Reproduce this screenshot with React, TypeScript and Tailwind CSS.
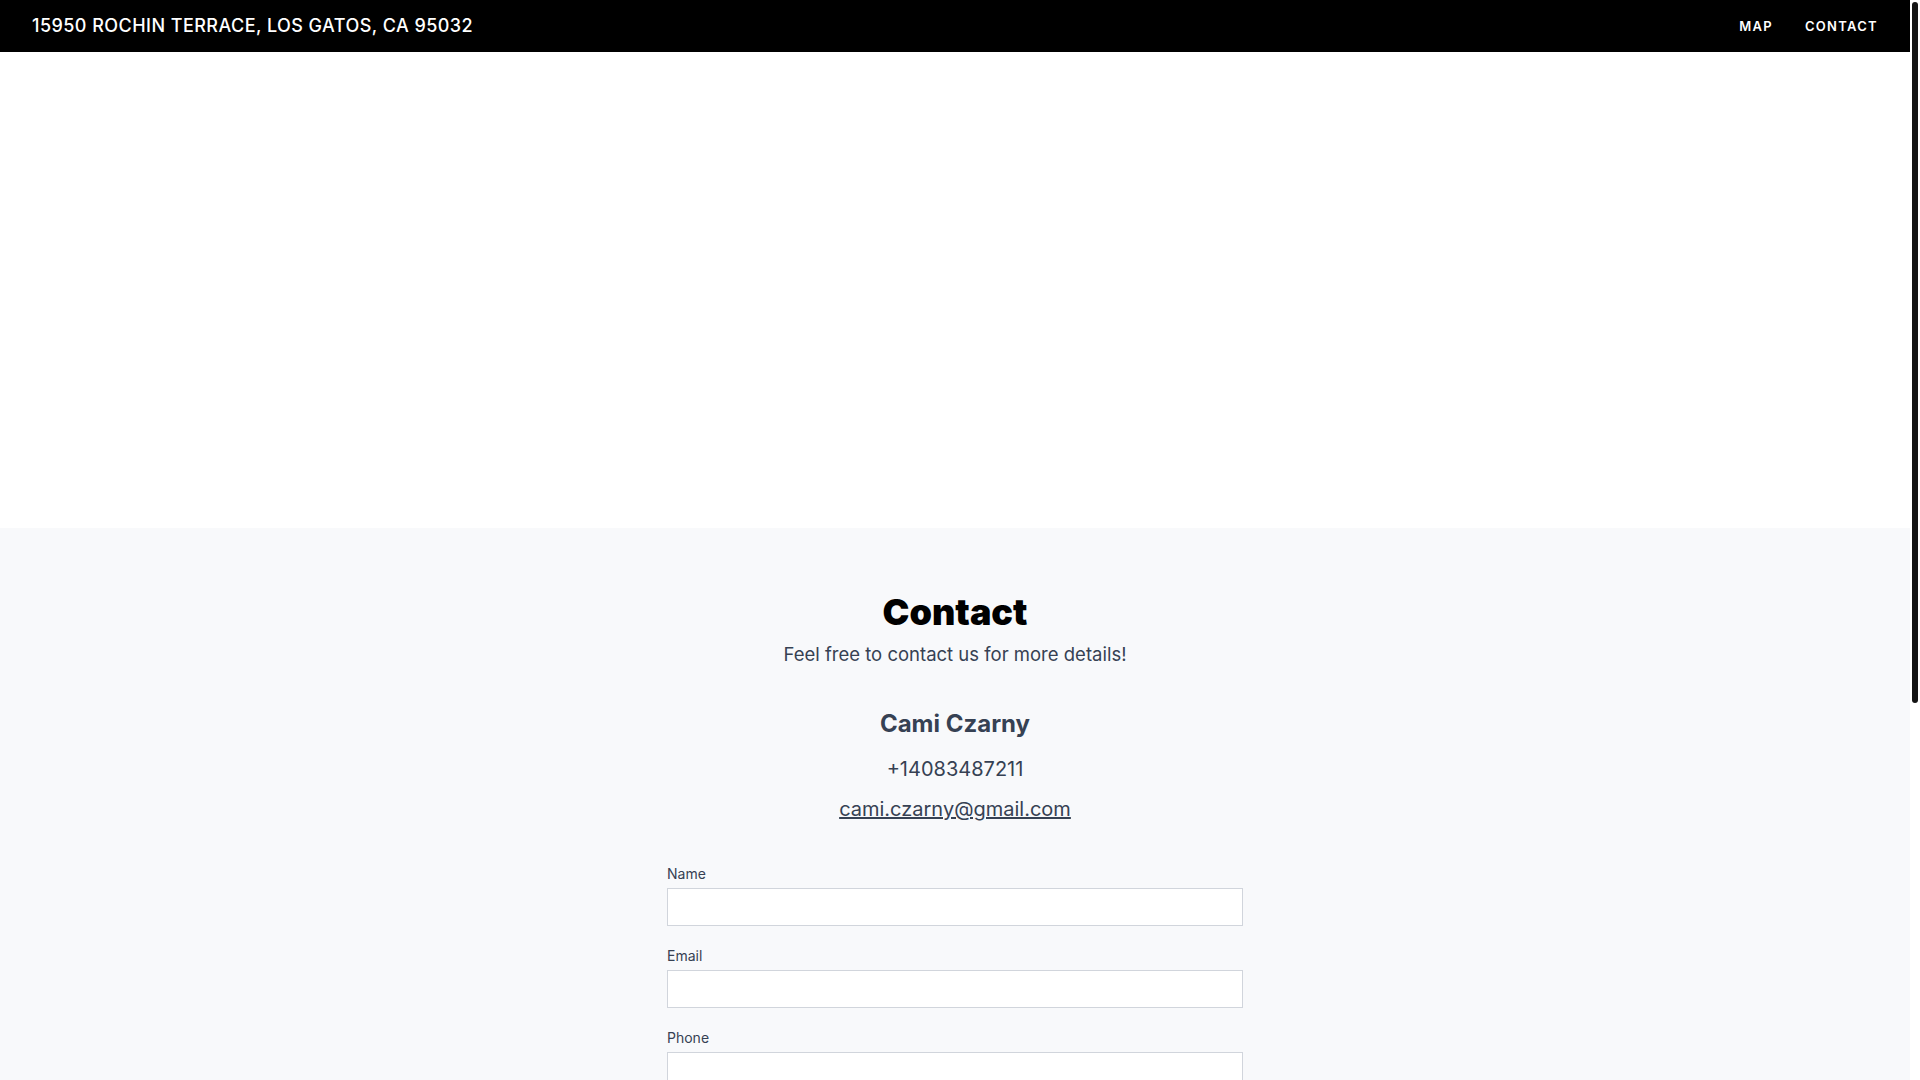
export default function App() {
  return (
    <div className="flex h-screen overflow-hidden bg-white font-['Inter',sans-serif]">
      <div className="min-w-0 flex-1">
        <header className="flex h-[52px] items-center justify-between bg-black pl-8 pr-4">
          <a href="#" className="text-lg font-medium tracking-wide text-white">
            15950 ROCHIN TERRACE, LOS GATOS, CA 95032
          </a>
          <nav className="flex items-center pt-0.5">
            <a href="#map" className="px-4 text-[13px] font-semibold tracking-widest text-white">
              MAP
            </a>
            <a href="#contact" className="px-4 text-[13px] font-semibold tracking-widest text-white">
              CONTACT
            </a>
          </nav>
        </header>

        <section id="map" className="h-[476px] bg-white"></section>

        <section id="contact" className="bg-[#f8f9fb] px-4 pt-16 pb-16">
          <div className="mx-auto flex max-w-xl flex-col items-center text-center">
            <h2 className="text-4xl font-black text-black">Contact</h2>
            <p className="mt-2 text-[18.5px] leading-7 text-gray-700">Feel free to contact us for more details!</p>

            <h3 className="mt-10 text-2xl font-bold text-gray-700">Cami Czarny</h3>
            <p className="mt-[15px] text-xl text-gray-700">+14083487211</p>
            <a href="mailto:cami.czarny@gmail.com" className="mt-3 text-xl text-gray-700 underline">
              cami.czarny@gmail.com
            </a>
          </div>

          <form className="mx-auto mt-[41px] flex w-[576px] flex-col gap-5">
            <div className="flex flex-col">
              <label className="mb-1 text-sm text-gray-700">Name</label>
              <input type="text" className="h-[38px] border border-gray-300 bg-white px-3 text-sm" />
            </div>
            <div className="flex flex-col">
              <label className="mb-1 text-sm text-gray-700">Email</label>
              <input type="email" className="h-[38px] border border-gray-300 bg-white px-3 text-sm" />
            </div>
            <div className="flex flex-col">
              <label className="mb-1 text-sm text-gray-700">Phone</label>
              <input type="tel" className="h-[38px] border border-gray-300 bg-white px-3 text-sm" />
            </div>
            <div className="flex flex-col">
              <label className="mb-1 text-sm text-gray-700">Message</label>
              <textarea rows={4} className="resize-none border border-gray-300 bg-white px-3 py-2 text-sm"></textarea>
            </div>
          </form>
        </section>
      </div>

      {/* scrollbar */}
      <div className="w-[10px] shrink-0 bg-white py-[2px]">
        <div className="mx-auto h-[701px] w-[6px] rounded-full bg-[#141414]"></div>
      </div>
    </div>
  );
}
